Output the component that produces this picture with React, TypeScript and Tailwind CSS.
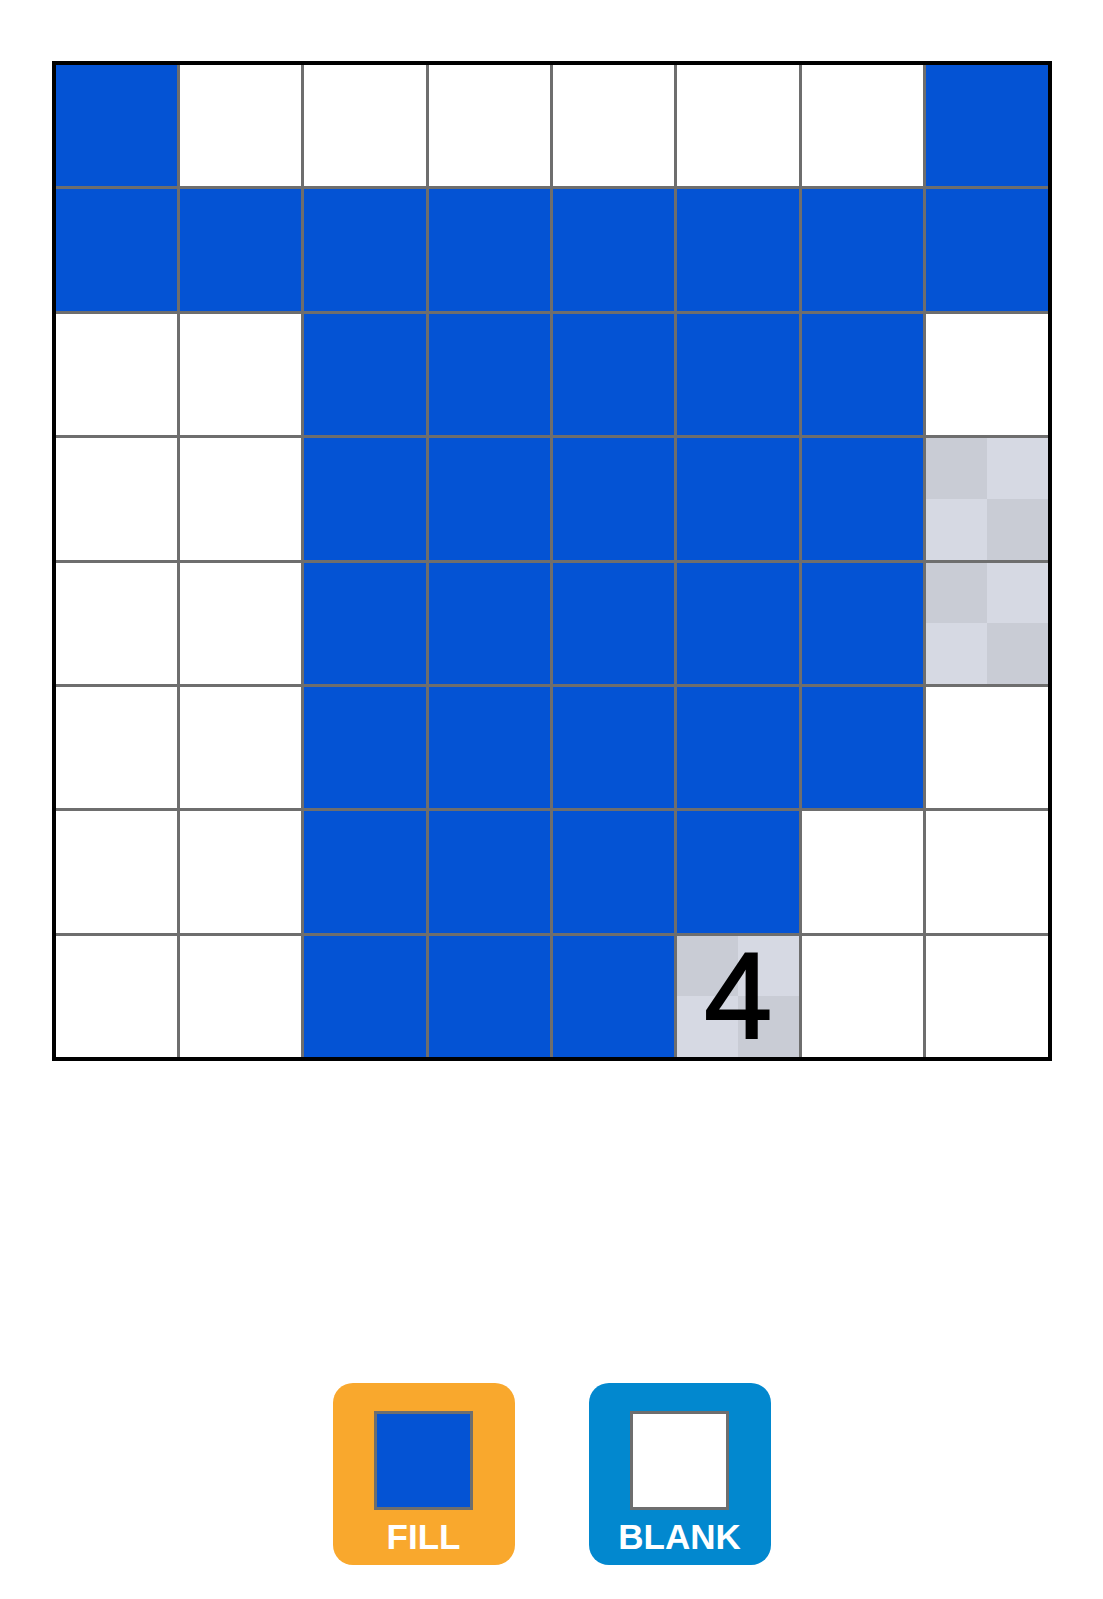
import React from "react";

// B = filled, W = blank, C = unknown (checker), N = unknown with a clue
const BOARD = [
  "BWWWWWWB",
  "BBBBBBBB",
  "WWBBBBBW",
  "WWBBBBBC",
  "WWBBBBBC",
  "WWBBBBBW",
  "WWBBBBWW",
  "WWBBBNWW",
];

function Checker({ children }: { children?: React.ReactNode }) {
  return (
    <div className="relative w-full h-full grid grid-cols-2 grid-rows-2">
      <div className="bg-[#c9ccd5]" />
      <div className="bg-[#d6d9e3]" />
      <div className="bg-[#d6d9e3]" />
      <div className="bg-[#c9ccd5]" />
      {children && (
        <div className="absolute inset-0 flex items-center justify-center text-[122px] leading-[121px] text-black [-webkit-text-stroke:2px_black]">
          {children}
        </div>
      )}
    </div>
  );
}

function Cell({ kind }: { kind: string }) {
  if (kind === "B") return <div className="bg-[#0453d4]" />;
  if (kind === "W") return <div className="bg-white" />;
  if (kind === "N") return <Checker>4</Checker>;
  return <Checker />;
}

function ToolButton({
  label,
  bg,
  swatch,
}: {
  label: string;
  bg: string;
  swatch: string;
}) {
  return (
    <button
      className={`w-[182px] h-[182px] rounded-[20px] flex flex-col items-center pt-[28px] ${bg}`}
    >
      <div className={`w-[99px] h-[99px] border-[3px] border-[#6e6e6e] ${swatch}`} />
      <span className="mt-[9px] text-[35px] leading-[35px] font-bold text-white">
        {label}
      </span>
    </button>
  );
}

export default function App() {
  return (
    <div
      className="min-h-screen bg-white flex flex-col items-center pt-[61px]"
      style={{ fontFamily: '"Liberation Sans", Arial, sans-serif' }}
    >
      {/* Puzzle board */}
      <div className="w-[1000px] h-[1000px] border-4 border-black bg-[#6e6e6e] grid grid-cols-8 grid-rows-8 gap-[3px]">
        {BOARD.map((row, r) =>
          row.split("").map((kind, c) => <Cell key={`${r}-${c}`} kind={kind} />)
        )}
      </div>

      {/* Tools */}
      <div className="mt-[322px] flex gap-[74px]">
        <ToolButton label="FILL" bg="bg-[#f9a82d]" swatch="bg-[#0453d4]" />
        <ToolButton label="BLANK" bg="bg-[#0288cf]" swatch="bg-white" />
      </div>
    </div>
  );
}
